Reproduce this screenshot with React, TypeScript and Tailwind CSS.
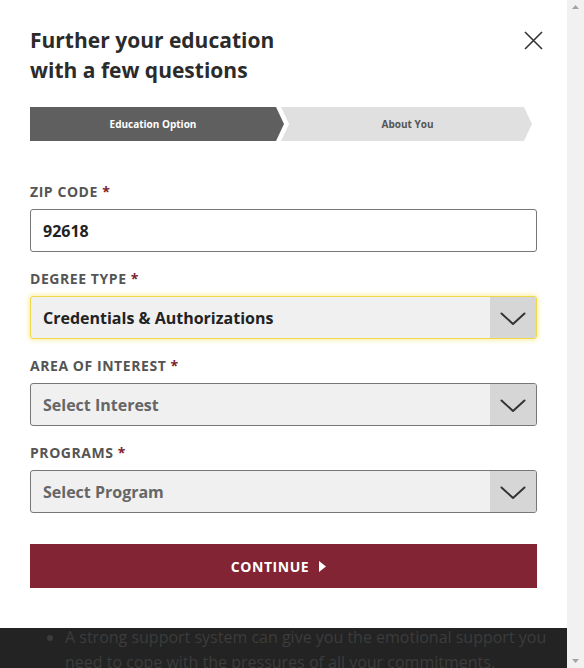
import { useState } from "react"

const font = { fontFamily: '"Open Sans", "Noto Sans", sans-serif' }

function Chevron() {
  return (
    <svg width="26" height="14" viewBox="0 0 26 14" fill="none">
      <path d="M1.5 1.5 L13 12 L24.5 1.5" stroke="#333" strokeWidth="2" strokeLinecap="round" strokeLinejoin="round" />
    </svg>
  )
}

interface SelectProps {
  label: string
  value: string
  placeholder?: boolean
  focused?: boolean
}

function SelectField({ label, value, placeholder, focused }: SelectProps) {
  return (
    <div>
      <div className="text-[14px] font-bold tracking-[0.04em] text-[#555] leading-[20px] mb-[7px]">
        {label} <span className="text-[#7b2331]">*</span>
      </div>
      <div
        className={
          focused
            ? "flex h-[43px] rounded-[3px] border border-[#f0d84c] bg-[#f0f0f0] shadow-[0_0_5px_1px_rgba(245,220,80,0.55)] overflow-hidden"
            : "flex h-[43px] rounded-[3px] border border-[#777] bg-[#f0f0f0] overflow-hidden"
        }
      >
        <div
          className={
            placeholder
              ? "flex-1 flex items-center pl-[12px] text-[16px] font-bold text-[#666]"
              : "flex-1 flex items-center pl-[12px] text-[16px] font-bold text-[#222]"
          }
        >
          {value}
        </div>
        <div className="w-[46px] bg-[#d6d6d6] flex items-center justify-center pt-[2px]">
          <Chevron />
        </div>
      </div>
    </div>
  )
}

export default function App() {
  const [zip, setZip] = useState("92618")

  return (
    <div className="flex w-[584px] h-[668px] overflow-hidden" style={font}>
      <div className="flex-1 flex flex-col">
        <div className="h-[628px] bg-white px-[30px] pt-[25px] shrink-0">
          <div className="flex justify-between">
            <h1 className="text-[21px] font-bold leading-[30px] text-[#2b2b2b]">
              Further your education
              <br />
              with a few questions
            </h1>
            <button className="mt-[5px] mr-[-6px] h-[20px] w-[20px] flex items-center justify-center">
              <svg width="19" height="19" viewBox="0 0 19 19">
                <path d="M1 1 L18 18 M18 1 L1 18" stroke="#333" strokeWidth="1.6" />
              </svg>
            </button>
          </div>

          <div className="flex mt-[22px] h-[34px] text-[10px] font-bold">
            <div className="w-[254px] bg-[#5f5f5f] text-white flex items-center justify-center pr-[8px] [clip-path:polygon(0_0,246px_0,254px_50%,246px_100%,0_100%)]">
              Education Option
            </div>
            <div className="ml-[-3px] w-[253px] bg-[#e0e0e0] text-[#555] flex items-center justify-center [clip-path:polygon(0_0,243px_0,251px_50%,243px_100%,0_100%,8px_50%)]">
              About You
            </div>
          </div>

          <div className="mt-[41px] flex flex-col gap-[17px]">
            <div>
              <div className="text-[14px] font-bold tracking-[0.04em] text-[#555] leading-[20px] mb-[7px]">
                ZIP CODE <span className="text-[#7b2331]">*</span>
              </div>
              <input
                value={zip}
                onChange={(e) => setZip(e.target.value)}
                className="w-full h-[43px] rounded-[3px] border border-[#777] bg-white px-[12px] text-[16px] font-bold text-[#222] outline-none"
              />
            </div>
            <SelectField label="DEGREE TYPE" value="Credentials & Authorizations" focused />
            <SelectField label="AREA OF INTEREST" value="Select Interest" placeholder />
            <SelectField label="PROGRAMS" value="Select Program" placeholder />
          </div>

          <button className="mt-[31px] w-full h-[44px] bg-[#822433] text-white text-[14px] font-bold tracking-[0.04em] flex items-center justify-center gap-[10px] pr-[10px]">
            CONTINUE
            <svg width="7" height="11" viewBox="0 0 7 11">
              <path d="M0 0 L7 5.5 L0 11 Z" fill="white" />
            </svg>
          </button>
        </div>

        <div className="flex-1 bg-[#232323] overflow-hidden">
          <ul className="list-disc pl-[65px] pr-[20px] text-[16px] leading-[25px] text-[#3c3c3c] -mt-[3px]">
            <li>
              A strong support system can give you the emotional support you need to cope with the pressures of all your commitments.
            </li>
          </ul>
        </div>
      </div>

      <div className="w-[17px] bg-[#f1f1f1] flex flex-col justify-between items-center py-[5px]">
        <svg width="7" height="4" viewBox="0 0 7 4">
          <path d="M0 4 L3.5 0 L7 4 Z" fill="#a3a3a3" />
        </svg>
        <svg width="7" height="4" viewBox="0 0 7 4">
          <path d="M0 0 L3.5 4 L7 0 Z" fill="#a3a3a3" />
        </svg>
      </div>
    </div>
  )
}
